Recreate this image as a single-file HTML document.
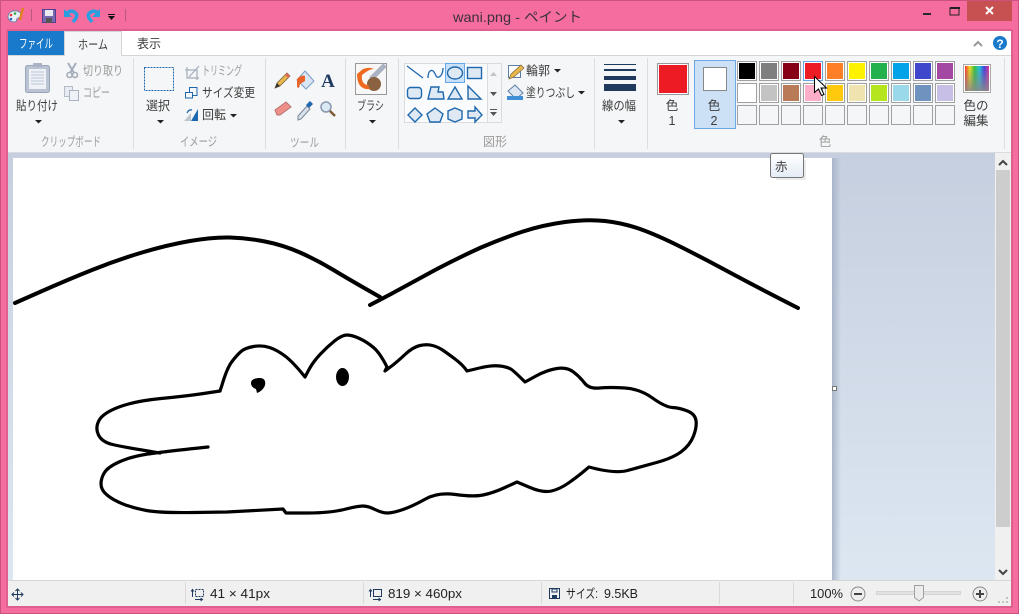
<!DOCTYPE html>
<html lang="ja"><head><meta charset="utf-8"><title>wani.png - ペイント</title>
<style>
html,body{margin:0;padding:0;background:#f56d9e;width:1019px;height:614px;overflow:hidden}
svg{display:block}
text{font-family:"Liberation Sans","Noto Sans CJK JP",sans-serif;font-size:12.5px;fill:#3c3c3c}
.g{fill:#9b9b9b}
.m{text-anchor:middle}
.c{fill:none;stroke:#1e68ad;stroke-width:1.3}
.s{fill:#dfe9f3;stroke:#1e68ad;stroke-width:1.4}
.sep{fill:#dcdee1}
.a{fill:#222}
</style></head><body>
<svg xmlns="http://www.w3.org/2000/svg" width="1019" height="614" viewBox="0 0 1019 614">
<defs>
<linearGradient id="bg" x1="0" y1="0" x2="0" y2="1"><stop offset="0" stop-color="#c5cfdf"/><stop offset="1" stop-color="#dde7f2"/></linearGradient>
<linearGradient id="sh" x1="0" y1="0" x2="1" y2="0"><stop offset="0" stop-color="#a9b5c9"/><stop offset="1" stop-color="#a9b5c9" stop-opacity="0"/></linearGradient>
<linearGradient id="tt" x1="0" y1="0" x2="0" y2="1"><stop offset="0" stop-color="#fff"/><stop offset="1" stop-color="#e4ecf6"/></linearGradient>
<linearGradient id="rb" x1="0" y1="0" x2="1" y2="0"><stop offset="0" stop-color="#ff2a2a"/><stop offset=".2" stop-color="#f0e020"/><stop offset=".4" stop-color="#30c040"/><stop offset=".6" stop-color="#20c0e0"/><stop offset=".8" stop-color="#4040e0"/><stop offset="1" stop-color="#e030a0"/></linearGradient>
<linearGradient id="rb2" x1="0" y1="0" x2="0" y2="1"><stop offset="0" stop-color="#888" stop-opacity="0"/><stop offset="1" stop-color="#8a8a8a" stop-opacity=".9"/></linearGradient>
</defs>

<!-- window frame -->
<rect x="0.5" y="0.5" width="1018" height="613" fill="#f56d9e" stroke="#c9527f"/>
<rect x="7" y="30" width="1005" height="577" fill="none" stroke="#c9527f"/>
<rect x="967" y="1" width="45" height="20" fill="#c75050"/>
<path d="M986 7l7 7M993 7l-7 7" stroke="#fff" stroke-width="2"/>
<rect x="923" y="13" width="8" height="2" fill="#2a2a2a"/>
<rect x="950" y="8" width="9" height="7" fill="none" stroke="#222" stroke-width="1"/><rect x="950" y="7" width="10" height="2" fill="#222"/>
<text x="453" y="22" textLength="129" lengthAdjust="spacingAndGlyphs" style="font-size:14px;fill:#3d3040">wani.png - ペイント</text>

<!-- quick access -->
<path d="M8 17c0-5 5-7 9-6 4 1 5 4 4 6-1 1-3 0-4 2-1 2 0 3-3 3-3 0-6-2-6-5z" fill="#e8eef5" stroke="#6b7fa5"/>
<circle cx="11" cy="15" r="1.3" fill="#e33"/><circle cx="15" cy="13.500" r="1.3" fill="#3a3"/><circle cx="11" cy="19" r="1.3" fill="#36c"/>
<path d="M23 8l-3 12" stroke="#e08020" stroke-width="2.500"/>
<rect x="31" y="9" width="1" height="12" fill="#b85a80"/>
<rect x="42.500" y="9.500" width="13" height="13" fill="#7b68b5" stroke="#4f3f8c"/><rect x="45" y="10" width="8" height="6" fill="#e9e9f2"/><rect x="46" y="18" width="6" height="5" fill="#555"/>
<path d="M67 13q4-3 7-1 4 2 2 6l-3 4" fill="none" stroke="#2a9fe0" stroke-width="3.500"/><path d="M64 9v8h8z" fill="#2a9fe0"/>
<path d="M98 13q-4-3-7-1-4 2-2 6l3 4" fill="none" stroke="#2a9fe0" stroke-width="3.500"/><path d="M100 9v8h-8z" fill="#2a9fe0"/>
<rect x="108" y="14" width="7" height="1" fill="#111"/><path d="M108 16h7l-3.500 4z" fill="#111"/>
<rect x="125" y="9" width="1" height="12" fill="#b85a80"/>

<!-- ribbon bg -->
<rect x="8" y="31" width="1003" height="24" fill="#fff"/>
<rect x="8" y="55" width="1003" height="1" fill="#d5d5d5"/>
<rect x="8" y="56" width="1003" height="97" fill="#f5f6f7"/>
<rect x="8" y="152" width="1003" height="1" fill="#d9dbdf"/>
<rect x="8" y="31" width="56" height="24" fill="#1979ca"/>
<text x="19" y="48" textLength="34" lengthAdjust="spacingAndGlyphs" style="fill:#fff">ファイル</text>
<path d="M64.500 56V31.500H121.500V56" fill="#f5f6f7" stroke="#d5d5d5"/>
<text x="78" y="49" textLength="30" lengthAdjust="spacingAndGlyphs">ホーム</text>
<text x="137" y="48" textLength="24" lengthAdjust="spacingAndGlyphs">表示</text>
<path d="M974 46l4-4 4 4" fill="none" stroke="#999" stroke-width="2"/>
<circle cx="1000" cy="43" r="7" fill="#1979ca"/>
<text x="1000" y="48" class="m" style="fill:#fff;font-size:12px;font-weight:bold">?</text>

<!-- separators -->
<rect x="133" y="58" width="1" height="91" class="sep"/><rect x="265" y="58" width="1" height="91" class="sep"/><rect x="345" y="58" width="1" height="91" class="sep"/><rect x="398" y="58" width="1" height="91" class="sep"/><rect x="594" y="58" width="1" height="91" class="sep"/><rect x="647" y="58" width="1" height="91" class="sep"/><rect x="1004" y="58" width="1" height="91" class="sep"/>

<!-- clipboard -->
<rect x="25.500" y="65.500" width="24" height="27" rx="2" fill="#b9c3d3" stroke="#9aa5b8"/>
<rect x="29" y="69" width="17" height="20" fill="#eef1f6"/>
<path d="M31 72h13M31 75h13M31 78h13M31 81h13M31 84h13" stroke="#b9c4d6"/>
<rect x="33" y="63" width="9" height="4" rx="1" fill="#a8b2c4"/>
<text x="16" y="110" textLength="42" lengthAdjust="spacingAndGlyphs">貼り付け</text>
<path d="M35 120h7l-3.500 3.500z" class="a"/>
<path d="M68 63l6 10M76 63l-6 10" stroke="#a3adbb" stroke-width="2"/><circle cx="69.500" cy="75" r="2.500" fill="none" stroke="#a3adbb" stroke-width="1.600"/><circle cx="75" cy="75" r="2.500" fill="none" stroke="#a3adbb" stroke-width="1.600"/>
<text x="83" y="75" textLength="40" lengthAdjust="spacingAndGlyphs" class="g">切り取り</text>
<rect x="64.500" y="86.500" width="8" height="10" fill="#e8ecf2" stroke="#b4bcc9"/><rect x="69.500" y="90.500" width="9" height="10" fill="#eef1f5" stroke="#a8b1c0"/>
<text x="83" y="97" textLength="27" lengthAdjust="spacingAndGlyphs" class="g">コピー</text>
<text x="41" y="146" textLength="60" lengthAdjust="spacingAndGlyphs" class="g">クリップボード</text>

<!-- image -->
<rect x="144.500" y="67.500" width="29" height="23" fill="none" stroke="#1e68ad" stroke-dasharray="2 1"/>
<text x="146" y="110" textLength="24" lengthAdjust="spacingAndGlyphs">選択</text>
<path d="M157 120h7l-3.500 3.500z" class="a"/>
<path d="M187 67v11h12M185 70h12v10M199 66l-10 11" fill="none" stroke="#a3adbb" stroke-width="1.200"/>
<text x="202" y="75" textLength="40" lengthAdjust="spacingAndGlyphs" class="g">トリミング</text>
<rect x="189.500" y="87.500" width="7.500" height="8" fill="#f5f6f7" stroke="#1e68ad"/>
<rect x="185.500" y="92.500" width="7" height="5.500" fill="#f5f6f7" stroke="#1e68ad"/>
<text x="202" y="97" textLength="53" lengthAdjust="spacingAndGlyphs">サイズ変更</text>
<path d="M184 121l7-8v8z" fill="#c0c6cf"/><path d="M191 121l7-12v12z" fill="#1e68ad"/><path d="M187 113q2-4 5-3" fill="none" stroke="#1e68ad" stroke-width="1.300"/>
<text x="202" y="119" textLength="24" lengthAdjust="spacingAndGlyphs">回転</text>
<path d="M230 114h7l-3.500 3.500z" class="a"/>
<text x="180" y="146" textLength="37" lengthAdjust="spacingAndGlyphs" class="g">イメージ</text>

<!-- tools -->
<path d="M275 88l2-5 10-10 3 3-10 10z" fill="#e8b64a" stroke="#7a6a40" stroke-width=".8"/><path d="M275 88l2-5 3 3z" fill="#333"/><path d="M285 75l3 3 2-2-3-3z" fill="#e56a5a"/>
<path d="M305 71l9 10-8 8-9-9z" fill="#d9e5f2" stroke="#7d9ec4"/><path d="M297 79c3-3 5-4 8-3v5l-5 3-1 4-2-1z" fill="#e8642a"/>
<text x="328" y="87" class="m" style="font-family:'Liberation Serif',serif;font-size:19px;font-weight:bold;fill:#1e3a5f">A</text>
<path d="M275 110l11-8 5 5-11 8h-3z" fill="#ee8f8a" stroke="#b5726f"/>
<path d="M298 116l9-10 3 3-9 10-3 1z" fill="#d8e0ea" stroke="#7b8797"/><path d="M306 105l4-4 3 3-4 4z" fill="#1e68ad"/>
<circle cx="326" cy="107" r="5" fill="#dbe8f5" stroke="#8a99ad" stroke-width="1.500"/><path d="M330 111l5 5" stroke="#7b5a35" stroke-width="2.500"/>
<text x="290" y="147" textLength="29" lengthAdjust="spacingAndGlyphs" class="g">ツール</text>

<!-- brush -->
<rect x="355.500" y="63.500" width="31" height="31" fill="#f7f7f7" stroke="#999"/>
<path d="M385 65l-14 14" stroke="#aab3c2" stroke-width="5"/>
<ellipse cx="374" cy="84" rx="7" ry="7" fill="#8a6240"/>
<path d="M357 74c0 11 5 16 13 15l-2-4c-4 0-7-4-6-10l4-3c3-2 5-3 8-3-4-2-8-1-11 0z" fill="#ef6a1f"/>
<text x="357" y="110" textLength="27" lengthAdjust="spacingAndGlyphs">ブラシ</text>
<path d="M369 120h7l-3.500 3.500z" class="a"/>

<!-- shapes gallery -->
<rect x="404.500" y="63.500" width="97" height="59" fill="#f9fbfd" stroke="#d9dbde"/>
<rect x="487.500" y="63.500" width="14" height="59" fill="#f5f6f7" stroke="#d9dbde"/>
<path d="M490 76h7l-3.500-4z" fill="#c1c5cb"/><path d="M490 92h7l-3.500 4z" fill="#555"/>
<rect x="490" y="109" width="7" height="1" fill="#555"/><path d="M490 112h7l-3.500 4z" fill="#555"/>
<rect x="445.500" y="63.500" width="19" height="19" fill="#c9e0f7" stroke="#66a7e8"/>
<path d="M407 66l16 12" class="c"/>
<path d="M428 78c0-8 4-9 6-6s2 6 5 5 4-6 4-9" class="c"/>
<ellipse cx="455" cy="73" rx="7.500" ry="6" class="s" fill="#e6eff8"/>
<rect x="467.500" y="67.500" width="14" height="11" class="s"/>
<rect x="407.500" y="87.500" width="14" height="11" rx="3" class="s"/>
<path d="M431 87h8l-1 5h5l1 7h-16z" class="s"/>
<path d="M455 87l7 12h-14z" class="s"/>
<path d="M468 86l13 13h-13z" class="s"/>
<path d="M415 108l7 7-7 7-7-7z" class="s"/>
<path d="M435 108l8 6-3 8h-10l-3-8z" class="s"/>
<path d="M455 108l7 3v8l-7 3-7-3v-8z" class="s"/>
<path d="M468 111h7v-4l7 8-7 7v-4h-7z" class="s"/>
<text x="483" y="146" textLength="24" lengthAdjust="spacingAndGlyphs" class="g">図形</text>

<path d="M508.500 65.500h12v12h-12z" fill="#fff" stroke="#5c7fa6"/><path d="M509 79l2-5 10-9 3 3-10 9z" fill="#e8b64a" stroke="#7a6a40" stroke-width=".7"/>
<text x="526" y="75" textLength="24" lengthAdjust="spacingAndGlyphs">輪郭</text>
<path d="M554 69h7l-3.500 3.500z" class="a"/>
<path d="M515 85l8 8-7 6-8-8z" fill="#dce7f3" stroke="#5c7fa6"/><path d="M507 96h16v4h-16z" fill="#3f8fd6"/>
<text x="526" y="97" textLength="49" lengthAdjust="spacingAndGlyphs">塗りつぶし</text>
<path d="M578 91h7l-3.500 3.500z" class="a"/>

<!-- line width -->
<rect x="604" y="64" width="32" height="1" fill="#1e3a5f"/><rect x="604" y="69" width="32" height="2" fill="#1e3a5f"/><rect x="604" y="76" width="32" height="4" fill="#1e3a5f"/><rect x="604" y="84" width="32" height="7" fill="#1e3a5f"/>
<text x="602" y="110" textLength="34" lengthAdjust="spacingAndGlyphs">線の幅</text>
<path d="M618 120h7l-3.500 3.500z" class="a"/>

<!-- colors -->
<rect x="657.500" y="63.500" width="31" height="31" fill="#fff" stroke="#999"/><rect x="659" y="65" width="28" height="28" fill="#ed1c24"/>
<text x="672" y="110" class="m">色</text><text x="672" y="125" class="m">1</text>
<rect x="694.500" y="60.500" width="41" height="68" fill="#cce0f6" stroke="#6ba9e5"/>
<rect x="703.500" y="67.500" width="23" height="23" fill="#fff" stroke="#888"/>
<text x="714" y="110" class="m">色</text><text x="714" y="125" class="m">2</text>

<g stroke="#a0a0a0" fill="#fff">
<rect x="737.500" y="61.500" width="19" height="19"/><rect x="759.500" y="61.500" width="19" height="19"/><rect x="781.500" y="61.500" width="19" height="19"/><rect x="825.500" y="61.500" width="19" height="19"/><rect x="847.500" y="61.500" width="19" height="19"/><rect x="869.500" y="61.500" width="19" height="19"/><rect x="891.500" y="61.500" width="19" height="19"/><rect x="913.500" y="61.500" width="19" height="19"/><rect x="935.500" y="61.500" width="19" height="19"/>
<rect x="803.500" y="61.500" width="19" height="19" stroke="#66a7e8"/>
<rect x="737.500" y="83.500" width="19" height="19"/><rect x="759.500" y="83.500" width="19" height="19"/><rect x="781.500" y="83.500" width="19" height="19"/><rect x="803.500" y="83.500" width="19" height="19"/><rect x="825.500" y="83.500" width="19" height="19"/><rect x="847.500" y="83.500" width="19" height="19"/><rect x="869.500" y="83.500" width="19" height="19"/><rect x="891.500" y="83.500" width="19" height="19"/><rect x="913.500" y="83.500" width="19" height="19"/><rect x="935.500" y="83.500" width="19" height="19"/>
</g>
<g fill="#f5f6f7" stroke="#a0a0a0">
<rect x="737.500" y="105.500" width="19" height="19"/><rect x="759.500" y="105.500" width="19" height="19"/><rect x="781.500" y="105.500" width="19" height="19"/><rect x="803.500" y="105.500" width="19" height="19"/><rect x="825.500" y="105.500" width="19" height="19"/><rect x="847.500" y="105.500" width="19" height="19"/><rect x="869.500" y="105.500" width="19" height="19"/><rect x="891.500" y="105.500" width="19" height="19"/><rect x="913.500" y="105.500" width="19" height="19"/><rect x="935.500" y="105.500" width="19" height="19"/>
</g>
<rect x="739" y="63" width="16" height="16" fill="#000"/><rect x="761" y="63" width="16" height="16" fill="#7f7f7f"/><rect x="783" y="63" width="16" height="16" fill="#880015"/><rect x="805" y="63" width="16" height="16" fill="#ed1c24"/><rect x="827" y="63" width="16" height="16" fill="#ff7f27"/><rect x="849" y="63" width="16" height="16" fill="#fff200"/><rect x="871" y="63" width="16" height="16" fill="#22b14c"/><rect x="893" y="63" width="16" height="16" fill="#00a2e8"/><rect x="915" y="63" width="16" height="16" fill="#3f48cc"/><rect x="937" y="63" width="16" height="16" fill="#a349a4"/>
<rect x="739" y="85" width="16" height="16" fill="#fff"/><rect x="761" y="85" width="16" height="16" fill="#c3c3c3"/><rect x="783" y="85" width="16" height="16" fill="#b97a57"/><rect x="805" y="85" width="16" height="16" fill="#ffaec9"/><rect x="827" y="85" width="16" height="16" fill="#ffc90e"/><rect x="849" y="85" width="16" height="16" fill="#efe4b0"/><rect x="871" y="85" width="16" height="16" fill="#b5e61d"/><rect x="893" y="85" width="16" height="16" fill="#99d9ea"/><rect x="915" y="85" width="16" height="16" fill="#7092be"/><rect x="937" y="85" width="16" height="16" fill="#c8bfe7"/>

<rect x="963.500" y="64.500" width="27" height="28" fill="#fff" stroke="#aaa"/>
<rect x="965" y="66" width="24" height="25" fill="url(#rb)"/><rect x="965" y="66" width="24" height="25" fill="url(#rb2)"/>
<text x="976" y="110" class="m">色の</text><text x="976" y="125" class="m">編集</text>
<text x="825" y="146" class="m g">色</text>

<!-- canvas area -->
<rect x="8" y="153" width="987" height="428" fill="url(#bg)"/>
<rect x="832" y="158" width="9" height="423" fill="url(#sh)"/>
<rect x="13" y="158" width="819" height="423" fill="#fff"/>
<rect x="832.500" y="386.500" width="4" height="4" fill="#fff" stroke="#777"/>

<g fill="none" stroke="#000" stroke-linecap="round" stroke-linejoin="round">
<path stroke-width="4" d="M15,303 L41,291.500 Q67,280 92,270 Q117,260 142,252.500 Q167,245 190,241 Q213,237 230,237.500 Q247,238 265,241.500 Q283,245 300,252.500 Q317,260 333.500,270 Q350,280 380,297"/>
<path stroke-width="4" d="M370,305 L391,294 Q413,282 436,269.500 Q460,257 481,247.500 Q503,238 523,231.500 Q543,225 565,222 Q587,219 605,221 Q623,223 640,229 Q657,235 680,246.500 Q703,258 728,271.500 Q753,285 798,308"/>
<path stroke-width="3.200" d="M220,391 L222,385 Q227,368 232,361.500 Q237,355 241,351.500 Q245,348 253.500,346.500 Q262,345 269.500,347.500 Q277,350 285,356 Q293,362 305,377 L309,369.500 Q313,362 320,354.500 Q327,347 334.500,341 Q342,335 347,335 Q352,335 359.500,338.500 Q367,342 373.500,347.500 Q380,353 387,367 L385,371 L391,366.500 Q397,362 405,354.500 Q413,347 420,345.500 Q427,344 432.500,345.500 Q438,347 442.500,350 Q447,353 455,359 Q463,365 467,371 L479.500,368 Q492,365 500,366 Q508,367 511.500,369.500 Q515,372 525,382 L536,376 Q547,370 557,368.500 Q567,367 573.500,372 Q580,377 584.500,383 Q589,389 599.500,388 Q610,387 625,388 Q640,389 652.500,398 Q665,407 672.500,407.500 Q680,408 687.500,411 Q695,414 696,420.500 Q697,427 693.500,436 Q690,445 681.500,451.500 Q673,458 656.500,462.500 Q640,467 627.500,470.500 Q615,474 589,467 L583,472 Q577,477 568.500,483 Q560,489 551.500,491 Q543,493 530,487.500 L517,482 L505,487.500 Q493,493 483,495 Q473,497 455.500,494.500 Q438,492 425.500,499 Q413,506 403,509.500 Q393,513 387.500,513 Q382,513 375,509.500 Q368,506 363,506 Q358,506 344,509.500 Q330,513 308,513 L286,513 L283,509 L227,512 L193.500,512.500 Q160,513 146.500,510.500 Q133,508 123,504 Q113,500 107,495 Q101,490 101,484 Q101,478 104.500,472.500 Q108,467 119,462 Q130,457 145,454.500 Q160,452 208,447"/>
<path stroke-width="3.200" d="M220,391 L203.500,393.500 Q187,396 161,398.500 Q135,401 119,407 Q103,413 99,420.500 Q95,428 98.500,435 Q102,442 112.500,444.500 Q123,447 160,453"/>
</g>
<path d="M251 383c0-4 5-5 9-5 4 0 6 3 5 7-1 4-5 7-8 8l-1-4c-3-1-5-3-5-6z" fill="#000"/>
<ellipse cx="342.500" cy="377" rx="6.500" ry="9" fill="#000"/>

<!-- scrollbar -->
<rect x="995" y="153" width="16" height="428" fill="#f0f0f0"/>
<rect x="996" y="170" width="14" height="357" fill="#cdcdcd"/>
<path d="M999 165l4-4 4 4" fill="none" stroke="#444" stroke-width="2"/>
<path d="M999 570l4 4 4-4" fill="none" stroke="#444" stroke-width="2"/>

<!-- tooltip -->
<rect x="776" y="160" width="30" height="20" fill="#000" opacity=".08"/>
<rect x="770.500" y="153.500" width="33" height="24" rx="2" fill="url(#tt)" stroke="#767676"/>
<text x="775" y="171">赤</text>

<!-- cursor -->
<path d="M814.500 76.500v16l4-3.500 3 6.500 2.500-1-3-6.500h5.500z" fill="#fff" stroke="#000"/>

<!-- status bar -->
<rect x="8" y="581" width="1003" height="25" fill="#f0f0f0"/>
<rect x="8" y="580" width="1003" height="1" fill="#d7d7d7"/>
<rect x="185" y="582" width="1" height="22" fill="#dadada"/><rect x="363" y="582" width="1" height="22" fill="#dadada"/><rect x="541" y="582" width="1" height="22" fill="#dadada"/><rect x="719" y="582" width="1" height="22" fill="#dadada"/><rect x="793" y="582" width="1" height="22" fill="#dadada"/>
<path d="M17.500 589v11M12 594.500h11M15.500 591l2-2 2 2M15.500 598l2 2 2-2M14 592.500l-2 2 2 2M21 592.500l2 2-2 2" fill="none" stroke="#1e3a5f"/>
<path d="M192.500 590v7M191 591.500l1.500-2 1.500 2M195 599.500h7M200.500 598l2 1.500-2 1.500" fill="none" stroke="#1e3a5f"/>
<rect x="195.500" y="589.500" width="8" height="7" fill="none" stroke="#1e3a5f" stroke-dasharray="2 1"/>
<text x="210" y="598" textLength="60" lengthAdjust="spacingAndGlyphs" style="fill:#222">41 × 41px</text>
<path d="M370.500 590v7M369 591.500l1.500-2 1.500 2M373 599.500h7M378.500 598l2 1.500-2 1.500" fill="none" stroke="#1e3a5f"/>
<rect x="373.500" y="589.500" width="8" height="7" fill="none" stroke="#1e3a5f"/>
<text x="388" y="598" textLength="74" lengthAdjust="spacingAndGlyphs" style="fill:#222">819 × 460px</text>
<rect x="549.500" y="588.500" width="10" height="10" fill="none" stroke="#1e3a5f"/><rect x="552" y="589" width="5" height="3" fill="none" stroke="#1e3a5f"/><rect x="552" y="595" width="5" height="3" fill="#1e3a5f"/>
<text x="566" y="598" textLength="32" lengthAdjust="spacingAndGlyphs" style="fill:#222">サイズ:</text>
<text x="604" y="598" textLength="34" lengthAdjust="spacingAndGlyphs" style="fill:#222">9.5KB</text>
<text x="810" y="598" textLength="33" lengthAdjust="spacingAndGlyphs" style="fill:#222">100%</text>
<circle cx="858" cy="594" r="7" fill="#eee" stroke="#8a8a8a"/><rect x="854" y="593" width="8" height="2" fill="#444"/>
<rect x="876.500" y="591.500" width="84" height="3" fill="#e2e2e2" stroke="#d4d4d4"/>
<path d="M914.500 585.500h9v12l-4.500 3.500-4.500-3.500z" fill="#ececec" stroke="#a0a0a0"/>
<circle cx="980" cy="594" r="7" fill="#eee" stroke="#8a8a8a"/><path d="M976 594h8M980 590v8" stroke="#444" stroke-width="2"/>
<path d="M1006 597h2v2h-2zM1002 601h2v2h-2zM1006 601h2v2h-2zM998 601h2v2h-2z" fill="#c4c4c4"/>
</svg>
</body></html>
